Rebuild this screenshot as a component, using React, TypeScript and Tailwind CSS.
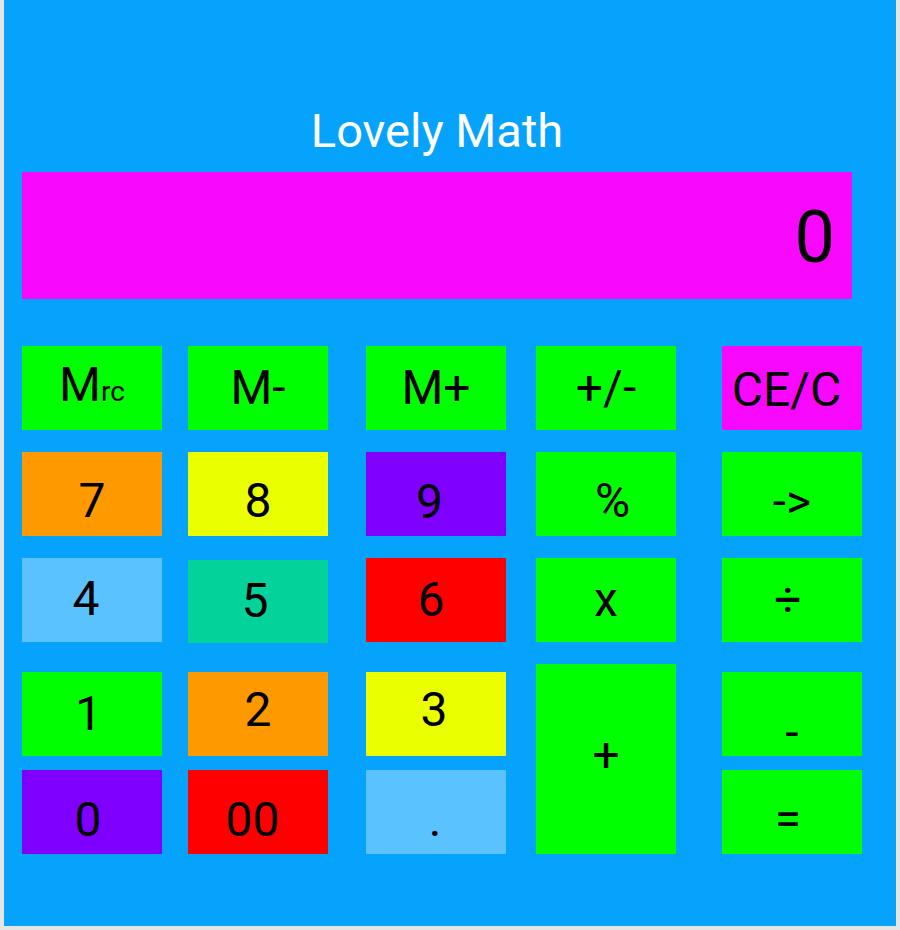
import React from "react";

type Btn = { label: React.ReactNode; bg: string; cls: string; h?: string; mt: string };

const base =
  "w-[140px] flex items-center justify-center text-[48px] leading-[56px] text-black font-['Roboto',sans-serif]";

const columns: { ml: string; items: Btn[] }[] = [
  {
    ml: "ml-[18px]",
    items: [
      {
        label: (
          <span>
            M<span className="text-[28px]">rc</span>
          </span>
        ),
        bg: "bg-[#00ff00]",
        cls: "",
        mt: "mt-[47px]",
      },
      { label: "7", bg: "bg-[#ff9900]", cls: "pt-[13px]", mt: "mt-[22px]" },
      { label: "4", bg: "bg-[#5ac2ff]", cls: "pr-[12px] pb-[3px]", mt: "mt-[22px]" },
      { label: "1", bg: "bg-[#00ff00]", cls: "pr-[7px]", mt: "mt-[30px]" },
      { label: "0", bg: "bg-[#7f00ff]", cls: "pr-[8px] pt-[15px]", mt: "mt-[14px]" },
    ],
  },
  {
    ml: "ml-[26px]",
    items: [
      { label: "M-", bg: "bg-[#00ff00]", cls: "", mt: "mt-[47px]" },
      { label: "8", bg: "bg-[#eaff00]", cls: "pt-[13px]", mt: "mt-[22px]" },
      { label: "5", bg: "bg-[#03d29b]", cls: "pr-[6px] pb-[2px]", h: "h-[83px]", mt: "mt-[24px]" },
      { label: "2", bg: "bg-[#ff9900]", cls: "pb-[8px]", mt: "mt-[29px]" },
      { label: "00", bg: "bg-[#ff0000]", cls: "pr-[11px] pt-[15px]", mt: "mt-[14px]" },
    ],
  },
  {
    ml: "ml-[38px]",
    items: [
      { label: "M+", bg: "bg-[#00ff00]", cls: "", mt: "mt-[47px]" },
      { label: "9", bg: "bg-[#7f00ff]", cls: "pr-[13px] pt-[15px]", mt: "mt-[22px]" },
      { label: "6", bg: "bg-[#ff0000]", cls: "pr-[10px]", mt: "mt-[22px]" },
      { label: "3", bg: "bg-[#eaff00]", cls: "pr-[4px] pb-[8px]", mt: "mt-[30px]" },
      { label: ".", bg: "bg-[#5ac2ff]", cls: "pr-[2px] pt-[16px]", mt: "mt-[14px]" },
    ],
  },
  {
    ml: "ml-[30px]",
    items: [
      { label: "+/-", bg: "bg-[#00ff00]", cls: "", mt: "mt-[47px]" },
      { label: "%", bg: "bg-[#00ff00]", cls: "pl-[13px] pt-[14px]", mt: "mt-[22px]" },
      { label: "x", bg: "bg-[#00ff00]", cls: "", mt: "mt-[22px]" },
      { label: "+", bg: "bg-[#00ff00]", cls: "pb-[8px]", h: "h-[190px]", mt: "mt-[22px]" },
    ],
  },
  {
    ml: "ml-[46px]",
    items: [
      { label: "CE/C", bg: "bg-[#f808fc]", cls: "pr-[11px] pt-[3px]", mt: "mt-[47px]" },
      { label: "->", bg: "bg-[#00ff00]", cls: "pt-[16px]", mt: "mt-[22px]" },
      { label: "÷", bg: "bg-[#00ff00]", cls: "pr-[8px]", mt: "mt-[22px]" },
      { label: "-", bg: "bg-[#00ff00]", cls: "pt-[38px]", mt: "mt-[30px]" },
      { label: "=", bg: "bg-[#00ff00]", cls: "pr-[8px] pt-[14px]", mt: "mt-[14px]" },
    ],
  },
];

export default function App() {
  return (
    <div className="w-[900px] h-[930px] bg-[#e5e5e5] pl-[4px] font-['Roboto',sans-serif]">
      <div className="w-[892px] h-[926px] bg-[#05a3fb] flex flex-col">
        <div className="ml-[18px] w-[830px] pt-[104px]">
          <div className="text-center text-white text-[47px] leading-[54px]">Lovely Math</div>
          <div className="mt-[14px] h-[127px] bg-[#f808fc] flex items-center justify-end pr-[17px] pt-[5px]">
            <span className="text-[72px] leading-[84px] text-black">0</span>
          </div>
        </div>
        <div className="flex flex-row">
          {columns.map((col, ci) => (
            <div key={ci} className={`flex flex-col ${col.ml}`}>
              {col.items.map((b, bi) => (
                <div key={bi} className={`${base} ${b.bg} ${b.cls} ${b.h ?? "h-[84px]"} ${b.mt}`}>
                  {b.label}
                </div>
              ))}
            </div>
          ))}
        </div>
      </div>
    </div>
  );
}
